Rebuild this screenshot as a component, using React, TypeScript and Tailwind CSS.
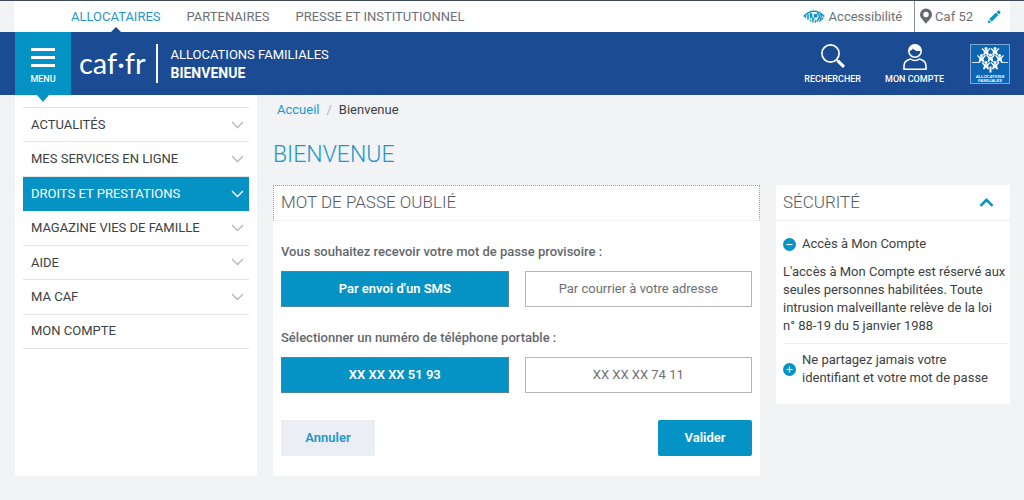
import { useState } from "react";

const menuItems = [
  { label: "ACTUALITÉS", expandable: true },
  { label: "MES SERVICES EN LIGNE", expandable: true },
  { label: "DROITS ET PRESTATIONS", expandable: true, active: true },
  { label: "MAGAZINE VIES DE FAMILLE", expandable: true },
  { label: "AIDE", expandable: true },
  { label: "MA CAF", expandable: true },
  { label: "MON COMPTE", expandable: false },
];

function EyeIcon() {
  return (
    <svg width="22" height="14" viewBox="0 0 22 14" fill="none" stroke="#0d93c4" aria-hidden="true">
      <path d="M.8 6.500C4 2.600 7.500 1.200 11 1.200s7 1.400 10.200 5.300" strokeWidth="1.600" />
      <path d="M2.500 5.500v2.300M5 4v5.800M7.500 3v5.500M7.500 9.800v1.800M10 8.500v4" strokeWidth="1.500" />
      <path d="M9 3.500c-1.200 2.500 0 5 2.500 5.500M12.500 10v2.800M14.500 9.500v2.300" strokeWidth="1.400" />
      <path d="M14 3c3 1.500 3 5 .5 7M17.500 4c1.200 1.500 1 3.500-.5 5.500" strokeWidth="1.500" />
      <path d="M20.500 7.500c-1 1.600-2.500 2.800-4.500 3.800" strokeWidth="1.300" />
      <circle cx="12.500" cy="5.800" r="2" fill="#0d93c4" stroke="none" />
    </svg>
  );
}

function PinIcon() {
  return (
    <svg width="14" height="17" viewBox="0 0 14 17" aria-hidden="true">
      <path
        fill="#66696e"
        fillRule="evenodd"
        d="M7 .5A6 6 0 0 0 1 6.500c0 3.600 3.400 5.500 6 9.500 2.600-4 6-5.900 6-9.500A6 6 0 0 0 7 .5Zm0 3.300a2.700 2.700 0 1 1 0 5.400 2.700 2.700 0 0 1 0-5.400Z"
      />
    </svg>
  );
}

function PencilIcon() {
  return (
    <svg width="14" height="14" viewBox="0 0 14 14" fill="#0d93c4" aria-hidden="true">
      <path d="m9.600 2 1.200-1.200c.5-.5 1.100-.5 1.600 0l.8.8c.5.500.5 1.100 0 1.600L12 4.400ZM9 2.600 11.400 5 4.800 11.600 2.200 9ZM1.600 9.700 4.100 12.200.7 13.200Z" />
    </svg>
  );
}

function SearchIcon() {
  return (
    <svg width="26" height="26" viewBox="0 0 26 26" fill="none" stroke="#fff" aria-hidden="true">
      <circle cx="10.500" cy="10.500" r="8.600" strokeWidth="1.700" />
      <path d="m16.500 16.500 2 2" strokeWidth="1.600" />
      <path d="m17.800 17.800 6.200 6" strokeWidth="3.200" />
    </svg>
  );
}

function AccountIcon() {
  return (
    <svg width="26" height="28" viewBox="0 0 26 28" fill="none" stroke="#fff" strokeWidth="1.600" aria-hidden="true">
      <circle cx="13" cy="8" r="6.200" />
      <path fill="#fff" stroke="none" d="M6.800 8C6.500 4 9.500 1.500 13 1.500s6 2.500 6.300 6.200c-3 .8-6.500.3-8.300-2.200-.8 1.500-2.200 2.500-4.200 2.500Z" />
      <path d="M8.500 16C4.500 17 2 19 2 23v3.200h22V23c0-4-2.500-6-6.500-7-2.500 2-6.500 2-9 0Z" />
    </svg>
  );
}

const people = [
  { x: 16, y: 4.5 },
  { x: 25, y: 4.5 },
  { x: 11.5, y: 11.5 },
  { x: 20.5, y: 11 },
  { x: 29.5, y: 11.5 },
  { x: 16, y: 18.5 },
  { x: 25, y: 18.5 },
];

function FamilyLogo() {
  return (
    <svg width="40" height="40" viewBox="0 0 40 40" role="img" aria-label="Allocations familiales">
      <rect x=".5" y=".5" width="39" height="39" fill="#0d66b4" stroke="#7fa9d6" />
      <path d="M2 18.500h8M31 18.500h7" stroke="#d5e5f5" strokeWidth="1.200" />
      <g fill="#fff">
        {people.map((p) => (
          <g key={`${p.x}-${p.y}`} transform={`translate(${p.x} ${p.y})`}>
            <circle r="1.500" />
            <path d="M-3.600-.6-1.200 1.700h2.400L3.600-.6l.8.9L2 3.200l1 3.300-1.200.5L0 5l-1.800 2L-3 6.500l1-3.300L-4.400.3Z" />
          </g>
        ))}
        <path d="M19.500 22.500h2v6h-2Z" />
      </g>
      <g
        fill="#fff"
        fontFamily="Liberation Sans, sans-serif"
        fontStyle="italic"
        fontWeight="700"
        fontSize="4"
        textAnchor="middle"
      >
        <text x="20" y="33.500">ALLOCATIONS</text>
        <text x="20" y="37.800">FAMILIALES</text>
      </g>
    </svg>
  );
}

function ToggleDot({ open }: { open: boolean }) {
  return (
    <svg className="shrink-0" width="13" height="13" viewBox="0 0 13 13" aria-hidden="true">
      <circle cx="6.500" cy="6.500" r="6.500" fill="#0592c4" />
      <path d={open ? "M3.500 6.500h6" : "M3.500 6.500h6M6.500 3.500v6"} stroke="#fff" strokeWidth="1.200" />
    </svg>
  );
}

function ChoiceGroup({ legend, name, options }: { legend: string; name: string; options: string[] }) {
  const [selected, setSelected] = useState(0);
  return (
    <fieldset>
      <legend className="text-[13px] leading-5 font-medium text-[#63686f]">{legend}</legend>
      <div className="mt-[9px] grid grid-cols-2 gap-4">
        {options.map((option, i) => (
          <label
            key={option}
            className={
              i === selected
                ? "flex h-9 cursor-pointer items-center justify-center border border-[#4b87a3] bg-[#0592c4] text-[13px] font-semibold text-white"
                : "flex h-9 cursor-pointer items-center justify-center border border-[#b4b7ba] bg-white text-[13px] text-[#6c7075]"
            }
          >
            <input type="radio" name={name} className="sr-only" checked={i === selected} onChange={() => setSelected(i)} />
            {option}
          </label>
        ))}
      </div>
    </fieldset>
  );
}

export default function App() {
  return (
    <div className="min-h-screen bg-[#f1f3f5] pb-6 font-[Roboto,sans-serif] text-[13px] text-[#3c3f43]">
      <div className="border-t border-[#3d4a57] px-[14px]">
        <div className="flex h-[31px] items-center justify-between bg-white pr-[9px] text-[#6c7075]">
          <nav aria-label="Espaces" className="flex h-full items-center gap-[26px] pl-[57px]">
            <a href="#allocataires" className="relative flex h-full items-center text-[#1f97cb]">
              ALLOCATAIRES
              <span className="absolute bottom-0 left-1/2 -translate-x-1/2 border-x-[5px] border-b-[5px] border-x-transparent border-b-[#1b4b93]" />
            </a>
            <a href="#partenaires">PARTENAIRES</a>
            <a href="#presse">PRESSE ET INSTITUTIONNEL</a>
          </nav>
          <div className="flex h-full items-center">
            <a href="#accessibilite" className="flex h-full items-center gap-1 border-r border-[#8e9196] pr-3">
              <EyeIcon />
              Accessibilité
            </a>
            <span className="flex items-center gap-[2px] pl-1">
              <PinIcon />
              Caf 52
            </span>
            <button type="button" aria-label="Modifier la Caf" className="ml-[14px]">
              <PencilIcon />
            </button>
          </div>
        </div>
      </div>

      <header className="flex h-[63px] items-center bg-[#1b4b93] pr-[14px] pl-[15px] text-white">
        <button type="button" className="relative flex h-full w-14 flex-col items-center bg-[#0592c4] pt-4 text-[9px] font-medium">
          <span className="flex w-6 flex-col gap-[5px]">
            <span className="h-[3px] bg-white" />
            <span className="h-[3px] bg-white" />
            <span className="h-[3px] bg-white" />
          </span>
          <span className="mt-[6px] leading-3">MENU</span>
          <span className="absolute top-full left-1/2 -translate-x-1/2 border-x-[6px] border-t-[7px] border-x-transparent border-t-[#0592c4]" />
        </button>
        <a href="#accueil" className="ml-2 pb-[2px] font-[Lato,sans-serif] text-[29px] leading-8">
          caf·fr
        </a>
        <div className="ml-[11px] flex h-[39px] flex-col justify-center border-l-2 border-white pl-3">
          <span className="text-[13px] leading-[18px]">ALLOCATIONS FAMILIALES</span>
          <span className="text-sm leading-[18px] font-bold">BIENVENUE</span>
        </div>
        <div className="ml-auto flex items-center">
          <button type="button" className="flex h-[42px] flex-col items-center justify-between text-[9px] leading-3 font-medium">
            <SearchIcon />
            RECHERCHER
          </button>
          <button type="button" className="ml-6 flex h-[42px] flex-col items-center justify-between text-[9px] leading-3 font-medium">
            <AccountIcon />
            MON COMPTE
          </button>
          <a href="#familles" className="ml-[26px]">
            <FamilyLogo />
          </a>
        </div>
      </header>

      <div className="flex gap-4 pr-[14px] pl-[15px]">
        <aside className="w-[242px] shrink-0 bg-white px-2 pt-3">
          <ul className="flex h-[242px] flex-col border-t border-[#e2e4e6]">
            {menuItems.map((item) => (
              <li key={item.label} className="flex flex-1 border-b border-[#e2e4e6]">
                <a
                  href="#menu"
                  className={
                    item.active
                      ? "-mb-px flex flex-1 items-center justify-between bg-[#0592c4] pr-[5px] pl-2 text-white"
                      : "flex flex-1 items-center justify-between pr-[5px] pl-2 text-[#3c3f43]"
                  }
                >
                  {item.label}
                  {item.expandable && (
                    <svg
                      width="13"
                      height="8"
                      viewBox="0 0 13 8"
                      fill="none"
                      stroke={item.active ? "#fff" : "#b5b8bb"}
                      strokeWidth="1.400"
                      aria-hidden="true"
                    >
                      <path d="m1 1 5.500 5.500L12 1" />
                    </svg>
                  )}
                </a>
              </li>
            ))}
          </ul>
        </aside>

        <main className="min-w-0 flex-1">
          <nav aria-label="Fil d'Ariane" className="flex gap-[7px] pt-[6px] pl-1 leading-[18px]">
            <a href="#accueil" className="text-[#1f97cb]">Accueil</a>
            <span className="text-[#b5b8bb]">/</span>
            <span>Bienvenue</span>
          </nav>
          <h1 className="mt-5 text-[23px] leading-8 font-light text-[#1f97cb]">BIENVENUE</h1>
          <div className="mt-[14px] flex items-start gap-4">
            <section className="min-w-0 flex-1 bg-white pb-5">
              <h2 className="flex h-9 items-center border border-dotted border-[#9a9ea2] border-b-[#eceeef] pl-[7px] text-[17px] font-light text-[#54595f]">
                MOT DE PASSE OUBLIÉ
              </h2>
              <form className="px-2 pt-[21px]" onSubmit={(e) => e.preventDefault()}>
                <ChoiceGroup
                  name="envoi"
                  legend="Vous souhaitez recevoir votre mot de passe provisoire :"
                  options={["Par envoi d'un SMS", "Par courrier à votre adresse"]}
                />
                <div className="mt-[21px]">
                  <ChoiceGroup
                    name="telephone"
                    legend="Sélectionner un numéro de téléphone portable :"
                    options={["XX XX XX 51 93", "XX XX XX 74 11"]}
                  />
                </div>
                <div className="mt-[27px] flex justify-between font-semibold">
                  <button type="button" className="h-9 w-[94px] bg-[#ebeef5] text-[#1f97cb]">
                    Annuler
                  </button>
                  <button type="submit" className="h-9 w-[94px] rounded-[2px] bg-[#0592c4] text-white">
                    Valider
                  </button>
                </div>
              </form>
            </section>

            <section className="w-[234px] shrink-0 bg-white pb-[17px]">
              <div className="flex h-9 items-center justify-between border-b border-[#eceeef] pr-4 pl-[7px]">
                <h2 className="text-[17px] font-light text-[#54595f]">SÉCURITÉ</h2>
                <button type="button" aria-label="Replier">
                  <svg width="15" height="9" viewBox="0 0 15 9" fill="none" stroke="#0592c4" strokeWidth="2.500" aria-hidden="true">
                    <path d="m1.500 7.800 6-6 6 6" />
                  </svg>
                </button>
              </div>
              <div className="mr-[2px] ml-[7px] border-b border-[#eceeef] pt-[14px] pb-2 leading-[18px]">
                <button type="button" className="flex items-center gap-[6px] text-left">
                  <ToggleDot open />
                  Accès à Mon Compte
                </button>
                <p className="mt-[10px]">
                  {"L'accès à Mon Compte est réservé aux seules personnes habilitées. Toute intrusion malveillante relève de la loi n°\u00a088-19 du 5 janvier 1988"}
                </p>
              </div>
              <button type="button" className="mx-[7px] mt-[7px] flex items-center gap-[6px] text-left leading-[18px]">
                <ToggleDot open={false} />
                Ne partagez jamais votre identifiant et votre mot de passe
              </button>
            </section>
          </div>
        </main>
      </div>
    </div>
  );
}
